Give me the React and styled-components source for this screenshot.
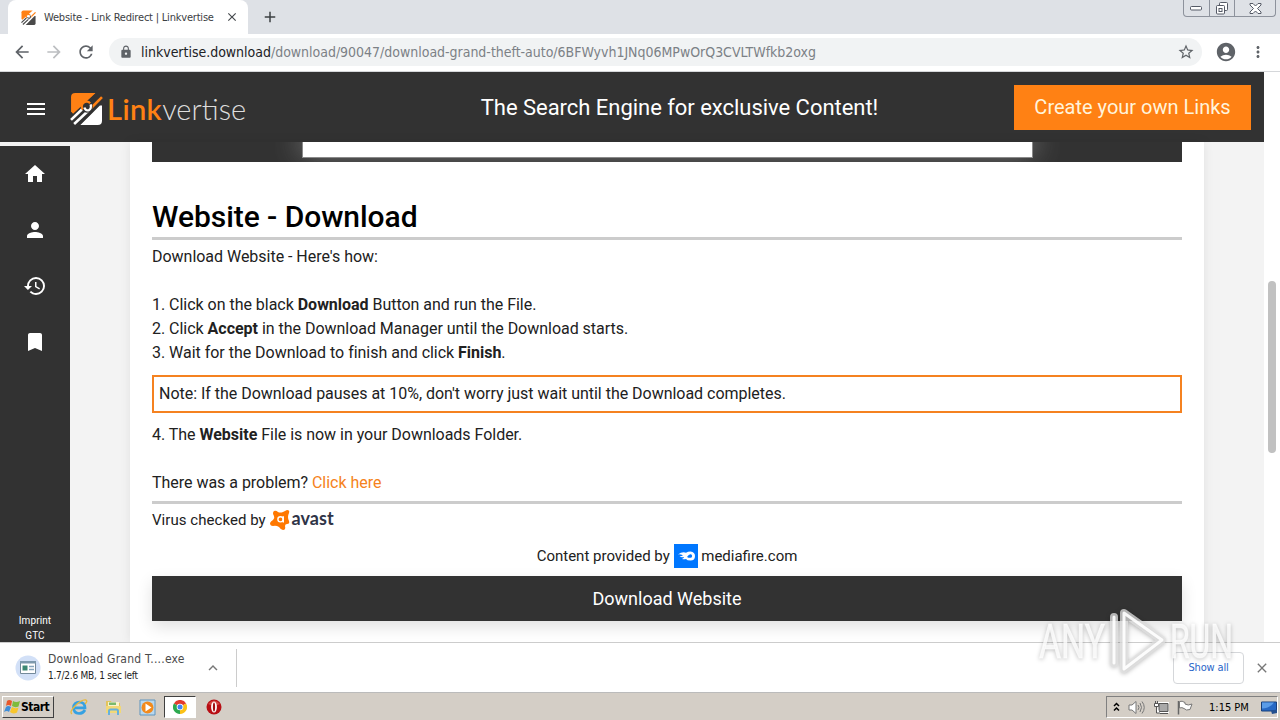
import React from "react";
import styled, { createGlobalStyle, css } from "styled-components";
import {
  MdAccountCircle,
  MdAdd,
  MdArrowBack,
  MdArrowForward,
  MdBookmark,
  MdClose,
  MdHistory,
  MdHome,
  MdKeyboardArrowUp,
  MdLock,
  MdMenu,
  MdMoreVert,
  MdPerson,
  MdRefresh,
  MdStarBorder,
} from "react-icons/md";

function LinkvertiseMark({ size, light, gap }) {
  return (
    <svg width={size} height={size} viewBox="0 0 32 32" fill="none">
      <path d="M1 19V5Q1 1 5 1H25L3 21Z" fill="#ff8114" />
      <path d="M31 13V28Q31 32 27 32H10L29 13Z" fill={light} />
      <path d="M2 24L12 14.500M17 10L26 1.500" stroke={gap} strokeWidth="2" />
      <path d="M1 27L13 15.500" stroke={light} strokeWidth="2.500" />
      <path d="M31 5L20 16" stroke="#ff8114" strokeWidth="2.500" />
      <path d="M4 31L18 18" stroke={light} strokeWidth="2.500" />
      <path d="M9 31L22 18" stroke={gap} strokeWidth="1.800" />
      <circle cx="16.500" cy="14.500" r="5.500" fill={gap} />
      <path d="M12.500 17A4.500 4.500 0 0 1 19.500 11" stroke="#ff8114" strokeWidth="2.200" />
      <path d="M14 15Q15 18.500 18.500 17.500Q21 16 20 12" stroke={light} strokeWidth="2.200" />
    </svg>
  );
}

function AvastMark() {
  return (
    <svg width="21" height="20" viewBox="0 0 21 20">
      <path
        d="M4 1Q6 0 8 2Q10 3 13 2L17 0Q20 0 19 3Q17 7 19 11Q20 14 17 14Q15 14 15 16Q16 20 13 20Q11 20 9 17Q6 15 3 16Q0 16 0 13Q1 11 3 10Q5 8 4 6Q2 3 4 1Z"
        fill="#ff7800"
      />
      <circle cx="10.500" cy="9.300" r="2.600" fill="none" stroke="#fff" strokeWidth="1.400" />
      <path d="M13.300 6.300V12.400" stroke="#fff" strokeWidth="1.400" />
    </svg>
  );
}

function MediafireMark() {
  return (
    <svg width="24" height="24" viewBox="0 0 24 24">
      <path fill="#0077ff" d="M0 0H24V24H0Z" />
      <path
        d="M4 10.500Q8 7.500 12 8.700Q14 7.500 16.500 7.500Q21 8 21 12Q21 16.500 16.500 16.500Q13 16.500 12 15Q10 15.500 8 15Q10 14 10 13Q7 13.500 5.500 12.500Q8 12 9 11.200Q6 10 4 10.500Z"
        fill="#fff"
      />
      <path d="M13 13Q15 9.800 17 10.300Q19.200 12 17.200 13.700Q15 14.200 13 13Z" fill="#0077ff" />
    </svg>
  );
}

function AnyRunMark() {
  return (
    <svg width="210" height="74" viewBox="0 0 210 74">
      <g
        fontFamily="Roboto, sans-serif"
        fontSize="49"
        fill="#fff"
        fillOpacity="0.8"
        stroke="#fff"
        strokeOpacity="0.5"
      >
        <text x="2" y="51" textLength="66" lengthAdjust="spacingAndGlyphs">ANY</text>
        <text x="133" y="51" textLength="63" lengthAdjust="spacingAndGlyphs">RUN</text>
      </g>
      <g fill="none" strokeLinejoin="round" strokeLinecap="round">
        <path d="M77 10V56M87 6L125 33L87 62Z" stroke="#e2e2e2" strokeOpacity="0.75" strokeWidth="8" />
        <path d="M77 10V56M87 6L125 33L87 62Z" stroke="#fff" strokeOpacity="0.9" strokeWidth="3" />
      </g>
    </svg>
  );
}

function StartFlag() {
  return (
    <svg width="17" height="16" viewBox="0 0 17 16">
      <path d="M3 2Q5 0 8 2L7 7Q4 5 2 7Z" fill="#e8582a" />
      <path d="M9 2Q12 4 16 2L14.500 7.500Q11 9 8 7Z" fill="#7ebb3c" />
      <path d="M2 8Q4 6 7 8L5 13Q3 11 0 13Z" fill="#3f8ed8" />
      <path d="M8 8Q11 10 14.500 8.500L13 13.500Q9 15.500 6 13Z" fill="#f8c62c" />
    </svg>
  );
}

function ExplorerIcon() {
  return (
    <svg width="18" height="18" viewBox="0 0 18 18">
      <path
        d="M15 12Q13 15.500 9 15.500Q3.500 15 3.500 9.500Q4 4 9.500 4Q15 4.500 15 9.800H5"
        fill="none"
        stroke="#35a1e2"
        strokeWidth="2.700"
      />
      <path d="M2 16Q-1 14 5 8Q12 1 16 2Q18 3 15 6" fill="none" stroke="#e8b93c" strokeWidth="1.300" />
    </svg>
  );
}

function FolderIcon() {
  return (
    <svg width="17" height="17" viewBox="0 0 17 17">
      <path d="M1 2H6L7 4H15V14H1Z" fill="#e3c45c" />
      <path d="M3 3H14V9H3Z" fill="#f8f2cc" />
      <path d="M4 3.500H11V6H4Z" fill="#79b96e" />
      <path d="M1 7H16V14H1Z" fill="#f2d877" />
      <path d="M4 16V12Q4 10.500 5.500 10.500H11.500Q13 10.500 13 12V16" fill="none" stroke="#67b1dc" strokeWidth="2" />
    </svg>
  );
}

function PlayerIcon() {
  return (
    <svg width="17" height="17" viewBox="0 0 17 17">
      <path d="M1 1H16V16H1Z" fill="#b9d8ee" stroke="#5e95be" />
      <circle cx="8.500" cy="8.500" r="6" fill="#f28a1c" />
      <path d="M6.500 4.500L12.500 8.500L6.500 12.500Z" fill="#fff" />
    </svg>
  );
}

function ChromeIcon() {
  return (
    <svg width="14" height="14" viewBox="0 0 14 14">
      <path d="M7 7L.9 3.500A7 7 0 0 1 13.100 3.500Z" fill="#e33b2e" />
      <path d="M7 7L13.100 3.500A7 7 0 0 1 7 14Z" fill="#fbc116" />
      <path d="M7 7L7 14A7 7 0 0 1 .9 3.500Z" fill="#2da94f" />
      <circle cx="7" cy="7" r="3.300" fill="#fff" />
      <circle cx="7" cy="7" r="2.500" fill="#4184f3" />
    </svg>
  );
}

function OperaIcon() {
  return (
    <svg width="16" height="16" viewBox="0 0 16 16">
      <circle cx="8" cy="8" r="7.500" fill="#b80e14" />
      <path d="M2 5Q8 -2 14 5Q8 8 2 5" fill="#e15a52" fillOpacity=".7" />
      <ellipse cx="8" cy="8" rx="2.900" ry="5.500" fill="#fff" />
      <ellipse cx="8" cy="8" rx="1.100" ry="4.500" fill="#a20d10" />
    </svg>
  );
}

function SpeakerIcon() {
  return (
    <svg width="17" height="15" viewBox="0 0 17 15" fill="none" stroke="#777">
      <path d="M1 5H4L8 1.500V13.500L4 10H1Z" fill="#fff" />
      <path d="M10 5Q12 7.500 10 10M12 3Q15 7.500 12 12M14 1.500Q18.500 7.500 14 13.500" />
    </svg>
  );
}

function NetworkIcon() {
  return (
    <svg width="16" height="15" viewBox="0 0 16 15" fill="none" stroke="#555">
      <path d="M6 3.500H15V11.500H6Z" stroke="#fff" strokeWidth="3" />
      <path d="M6 3.500H15V11.500H6Z" fill="#a9a9a9" />
      <path d="M7 13.500H15" />
      <path d="M1.500 3.500H5.500V6.500H1.500ZM2.500 1V3M4.500 1V3M3.500 7V13H7" fill="#fff" />
    </svg>
  );
}

function FlagIcon() {
  return (
    <svg width="16" height="15" viewBox="0 0 16 15">
      <path d="M1.500 1V14.500" stroke="#666" strokeWidth="1.500" />
      <path d="M2.500 1.500Q5 .5 8 2.500V4Q11 6 15 4L13 9.500Q9 11 7 8.500Q5 7 2.500 8Z" fill="#fff" stroke="#777" />
    </svg>
  );
}

function DesktopIcon() {
  return (
    <svg width="16" height="15" viewBox="0 0 16 15">
      <path d="M.5 2H15.500V11H.5Z" fill="#2668c4" stroke="#17407c" />
      <path d="M1 2.500H13Q9 8 1 8.500Z" fill="#5a9ce8" />
      <path d="M10 10.500L16 9.500V13L11 14Z" fill="#234f8e" />
    </svg>
  );
}

function FileIcon() {
  return (
    <svg width="26" height="26" viewBox="0 0 26 26">
      <circle cx="13" cy="13" r="12.500" fill="#d2e0f7" />
      <path d="M5.500 6.500H20.500V18.500H5.500Z" fill="#fff" stroke="#748a9b" />
      <path d="M5 6H21V8.500H5Z" fill="#7d99ad" />
      <path d="M7.500 10.500H12.500V15.500H7.500Z" fill="#3c8772" />
      <path d="M14 11.500H19M14 14.500H19" stroke="#86a5bd" strokeWidth="1.500" />
    </svg>
  );
}

function WindowControls() {
  return (
    <Controls>
      <Control $width={25}>
        <svg width="13" height="5" viewBox="0 0 13 5">
          <rect x=".5" y=".5" width="11" height="3.500" rx="1" fill="#fff" stroke="#555a66" />
        </svg>
      </Control>
      <Control $width={25}>
        <svg width="14" height="13" viewBox="0 0 14 13" fill="#fff" stroke="#555a66">
          <rect x="4.500" y=".5" width="8" height="8" rx="1" />
          <rect x="1.500" y="3.500" width="8" height="8.500" rx="1" />
          <rect x="4" y="6.500" width="3" height="3" />
        </svg>
      </Control>
      <Control $width={41}>
        <svg width="13" height="11" viewBox="0 0 13 11">
          <path
            d="M1 .5H4L6.500 3L9 .5H12V2L8.500 5.500L12 9V10.500H9L6.500 8L4 10.500H1V9L4.500 5.500L1 2Z"
            fill="#fff"
            stroke="#555a66"
          />
        </svg>
      </Control>
    </Controls>
  );
}

function App() {
  return (
    <Screen>
      <GlobalStyle />

      <TabStrip>
        <Tab>
          <LinkvertiseMark size={15} light="#4a4a4a" gap="#fff" />
          <TabTitle>Website - Link Redirect | Linkvertise</TabTitle>
          <MdClose size={14} />
        </Tab>
        <NewTab>
          <MdAdd size={18} />
        </NewTab>
        <WindowControls />
      </TabStrip>

      <Toolbar>
        <NavIcons>
          <MdArrowBack size={20} />
          <MdArrowForward size={20} color="#bcbec1" />
          <MdRefresh size={20} />
        </NavIcons>
        <AddressBar>
          <MdLock size={14} />
          <Url>
            <span>linkvertise.download</span>
            /download/90047/download-grand-theft-auto/6BFWyvh1JNq06MPwOrQ3CVLTWfkb2oxg
          </Url>
          <MdStarBorder size={18} />
        </AddressBar>
        <MdAccountCircle size={22} />
        <MdMoreVert size={18} />
      </Toolbar>

      <Viewport>
        <Page>
          <Header>
            <MdMenu size={24} />
            <Brand>
              <LinkvertiseMark size={33} light="#fff" gap="#323232" />
              <b>Link</b>
              <span>vertise</span>
            </Brand>
            <Tagline>The Search Engine for exclusive Content!</Tagline>
            <CreateButton>Create your own Links</CreateButton>
          </Header>

          <Main>
            <Sidebar>
              <MdHome />
              <MdPerson />
              <MdHistory />
              <MdBookmark />
              <SideLinks>
                <a>Imprint</a>
                <a>GTC</a>
              </SideLinks>
            </Sidebar>

            <Card>
              <Banner>
                <BannerFrame />
              </Banner>
              <h1>Website - Download</h1>
              <Steps>
                <p>Download Website - Here's how:</p>
                <br />
                <p>
                  1. Click on the black <b>Download</b> Button and run the File.
                </p>
                <p>
                  2. Click <b>Accept</b> in the Download Manager until the Download starts.
                </p>
                <p>
                  3. Wait for the Download to finish and click <b>Finish</b>.
                </p>
                <Note>
                  Note: If the Download pauses at 10%, don't worry just wait until the Download completes.
                </Note>
                <p>
                  4. The <b>Website</b> File is now in your Downloads Folder.
                </p>
                <br />
                <p>
                  There was a problem? <a>Click here</a>
                </p>
              </Steps>
              <Checked>
                Virus checked by <AvastMark />
                <b>avast</b>
              </Checked>
              <Provider>
                Content provided by <MediafireMark /> mediafire.com
              </Provider>
              <DownloadButton>Download Website</DownloadButton>
            </Card>
          </Main>
        </Page>
        <Scrollbar>
          <Thumb />
        </Scrollbar>
      </Viewport>

      <Shelf>
        <FileIcon />
        <FileInfo>
          <FileName>Download Grand T....exe</FileName>
          <FileStatus>1.7/2.6 MB, 1 sec left</FileStatus>
        </FileInfo>
        <MdKeyboardArrowUp size={18} />
        <ShelfDivider />
        <ShowAll>Show all</ShowAll>
        <MdClose size={16} />
      </Shelf>

      <Taskbar>
        <StartButton>
          <StartFlag />
          Start
        </StartButton>
        <TaskItem>
          <ExplorerIcon />
        </TaskItem>
        <TaskItem>
          <FolderIcon />
        </TaskItem>
        <TaskItem>
          <PlayerIcon />
        </TaskItem>
        <TaskItem $active>
          <ChromeIcon />
        </TaskItem>
        <TaskItem>
          <OperaIcon />
        </TaskItem>
        <Tray>
          <svg width="7" height="10" viewBox="0 0 7 10" fill="none" stroke="#000" strokeWidth="1.500">
            <path d="M1 4L3.500 1.500L6 4M1 8.500L3.500 6L6 8.500" />
          </svg>
          <SpeakerIcon />
          <NetworkIcon />
          <FlagIcon />
          <Clock>1:15 PM</Clock>
          <DesktopIcon />
        </Tray>
      </Taskbar>

      <Watermark>
        <AnyRunMark />
      </Watermark>
    </Screen>
  );
}

export default App;

const GlobalStyle = createGlobalStyle`
  * {
    box-sizing: border-box;
  }
  body {
    margin: 0;
    overflow: hidden;
    font-family: Roboto, sans-serif;
  }
  svg {
    flex-shrink: 0;
  }
`;

const uiFont = css`
  font-family: "DejaVu Sans Condensed", "DejaVu Sans", sans-serif;
  font-stretch: condensed;
`;

const Screen = styled.div`
  position: relative;
  display: flex;
  flex-direction: column;
  width: 1280px;
  height: 720px;
  overflow: hidden;
  background: #fff;
  white-space: nowrap;
`;

const TabStrip = styled.div`
  display: flex;
  height: 34px;
  padding-left: 8px;
  background: #dee1e6;
`;

const Tab = styled.div`
  display: flex;
  align-items: center;
  width: 240px;
  padding: 0 9px 0 13px;
  border-radius: 8px 8px 0 0;
  background: #fff;
  color: #45494d;
`;

const TabTitle = styled.div`
  ${uiFont}
  flex: 1;
  margin-left: 8px;
  font-size: 11px;
  letter-spacing: -0.2px;
  color: #3c4043;
`;

const NewTab = styled.div`
  display: flex;
  align-items: center;
  margin-left: 13px;
  color: #3c4043;
`;

const Controls = styled.div`
  display: flex;
  height: 17px;
  margin: 0 4px 0 auto;
  border: 1px solid #8d929c;
  border-top: 0;
  border-radius: 0 0 4px 4px;
`;

const Control = styled.div`
  display: flex;
  align-items: center;
  justify-content: center;
  width: ${({ $width }) => $width}px;
  & + & {
    border-left: 1px solid #8d929c;
  }
`;

const Toolbar = styled.div`
  display: flex;
  align-items: center;
  height: 38px;
  padding: 0 13px 2px 12px;
  border-bottom: 1px solid #d5d7da;
  color: #5f6368;
  > svg:last-child {
    margin-left: 12px;
  }
`;

const NavIcons = styled.div`
  display: flex;
  gap: 12px;
`;

const AddressBar = styled.div`
  display: flex;
  align-items: center;
  width: 1094px;
  height: 28px;
  margin: 0 13px 0 13px;
  padding: 0 7px 0 10px;
  border-radius: 14px;
  background: #f1f3f4;
`;

const Url = styled.div`
  ${uiFont}
  flex: 1;
  margin-left: 8px;
  font-size: 14px;
  letter-spacing: -0.02px;
  color: #7c8186;
  span {
    color: #202124;
  }
`;

const Viewport = styled.div`
  display: flex;
  height: 570px;
`;

const Page = styled.div`
  display: flex;
  flex-direction: column;
  width: 1264px;
  background: #f3f3f3;
`;

const Header = styled.div`
  display: flex;
  align-items: center;
  flex-shrink: 0;
  height: 70px;
  padding: 0 13px 0 24px;
  background: #323232;
  color: #fff;
  > svg:first-child {
    margin-top: 4px;
  }
`;

const Brand = styled.div`
  display: flex;
  align-items: center;
  width: 187px;
  margin: 3px 0 0 22px;
  font-family: Lato, sans-serif;
  font-size: 29px;
  b {
    margin-left: 4px;
    font-weight: 600;
    letter-spacing: 0.4px;
    color: #ff8114;
  }
  span {
    font-weight: 300;
    color: #ddd;
  }
`;

const Tagline = styled.div`
  flex: 1;
  padding-left: 88px;
  text-align: center;
  font-size: 22px;
  letter-spacing: -0.03px;
`;

const CreateButton = styled.div`
  width: 237px;
  height: 45px;
  background: #ff8114;
  color: #fff4dc;
  font-size: 20px;
  line-height: 45px;
  text-align: center;
`;

const Main = styled.div`
  display: flex;
  height: 500px;
`;

const Sidebar = styled.div`
  display: flex;
  flex-direction: column;
  align-items: center;
  gap: 32px;
  width: 70px;
  margin-top: 4px;
  padding-top: 16px;
  background: #323232;
  color: #fff;
  font-size: 24px;
`;

const SideLinks = styled.div`
  display: flex;
  flex-direction: column;
  margin: auto 0 -1px;
  font-size: 10px;
  letter-spacing: 0.1px;
  line-height: 15px;
  text-align: center;
`;

const Card = styled.div`
  width: 1074px;
  margin-left: 60px;
  padding: 0 22px;
  background: #fff;
  box-shadow: 0 0 10px rgba(0, 0, 0, 0.08);
  h1 {
    margin: 35px 0 0;
    border-bottom: 3px solid #ccc;
    font-size: 30px;
    font-weight: 500;
    letter-spacing: -0.05px;
    line-height: 40px;
    color: #000;
  }
`;

const Banner = styled.div`
  height: 20px;
  padding-left: 150px;
  overflow: hidden;
  background: #323232;
`;

const BannerFrame = styled.div`
  width: 731px;
  height: 16px;
  border: solid #8a8a8a;
  border-width: 0 1px 1px;
  background: #fff;
  box-shadow: 0 -8px 30px #aaa;
`;

const Steps = styled.div`
  padding: 5px 0 6px;
  border-bottom: 3px solid #ccc;
  font-size: 16px;
  letter-spacing: -0.025px;
  line-height: 24px;
  color: #212121;
  p {
    margin: 0;
  }
  a {
    color: #f58220;
  }
`;

const Note = styled.div`
  height: 38px;
  margin: 10px 0;
  padding-left: 5px;
  border: 2px solid #f58220;
  line-height: 34px;
`;

const Checked = styled.div`
  display: flex;
  align-items: center;
  height: 32px;
  padding-bottom: 1px;
  font-size: 15px;
  letter-spacing: 0.05px;
  line-height: 18px;
  white-space: pre;
  color: #212121;
  b {
    margin: -3px 0 0 1px;
    font-family: Lato, sans-serif;
    font-size: 18px;
    color: #2f3447;
  }
`;

const Provider = styled.div`
  display: flex;
  align-items: center;
  justify-content: center;
  height: 40px;
  font-size: 15px;
  white-space: pre;
  color: #212121;
`;

const DownloadButton = styled.div`
  height: 45px;
  background: #323232;
  box-shadow: 0 6px 16px rgba(0, 0, 0, 0.12);
  color: #fff;
  font-size: 18px;
  line-height: 45px;
  text-align: center;
`;

const Scrollbar = styled.div`
  width: 16px;
  padding: 209px 4px 0;
  background: #fff;
`;

const Thumb = styled.div`
  height: 172px;
  border-radius: 4px;
  background: #c1c1c1;
`;

const Shelf = styled.div`
  display: flex;
  align-items: center;
  height: 51px;
  padding: 0 10px 0 15px;
  border-top: 1px solid #ccc;
  border-bottom: 1px solid #bbb;
  background: #fff;
  color: #777;
`;

const FileInfo = styled.div`
  ${uiFont}
  width: 156px;
  margin-left: 7px;
`;

const FileName = styled.div`
  font-size: 12px;
  letter-spacing: 0.22px;
  line-height: 16px;
  color: #4a4a4a;
`;

const FileStatus = styled.div`
  font-size: 10px;
  letter-spacing: -0.25px;
  line-height: 17px;
  color: #222;
`;

const ShelfDivider = styled.div`
  width: 1px;
  height: 38px;
  margin-left: 14px;
  background: #ccc;
`;

const ShowAll = styled.div`
  ${uiFont}
  width: 71px;
  height: 32px;
  margin: 0 10px 0 auto;
  border: 1px solid #d5d7da;
  border-radius: 4px;
  color: #2a66c8;
  font-size: 11px;
  letter-spacing: -0.15px;
  line-height: 30px;
  text-align: center;
`;

const Taskbar = styled.div`
  display: flex;
  align-items: center;
  height: 27px;
  padding: 1px 2px 0;
  background: #d4cec6;
`;

const StartButton = styled.div`
  ${uiFont}
  display: flex;
  align-items: center;
  width: 52px;
  height: 22px;
  margin-right: 8px;
  padding-left: 1px;
  border: 1px solid;
  border-color: #fff #404040 #404040 #fff;
  font-size: 12px;
  font-weight: bold;
  letter-spacing: -0.5px;
  color: #000;
`;

const TaskItem = styled.div`
  display: flex;
  align-items: center;
  justify-content: center;
  width: ${({ $active }) => ($active ? 32 : 34)}px;
  height: 22px;
  border: 1px solid transparent;
  ${({ $active }) =>
    $active &&
    css`
      margin: 0 1px 0 0;
      border-color: #404040 #fff #fff #404040;
      background: #fff;
    `}
`;

const Tray = styled.div`
  ${uiFont}
  display: flex;
  align-items: center;
  gap: 8px;
  width: 172px;
  height: 22px;
  margin-left: auto;
  padding-left: 6px;
  border: 1px solid;
  border-color: #808080 #fff #fff #808080;
  font-size: 11px;
  color: #000;
`;

const Clock = styled.div`
  width: 41px;
  margin: 0 3px 0 8px;
`;

const Watermark = styled.div`
  position: absolute;
  top: 607px;
  left: 1037px;
  pointer-events: none;
  filter: drop-shadow(0 1px 2px rgba(0, 0, 0, 0.3));
`;
